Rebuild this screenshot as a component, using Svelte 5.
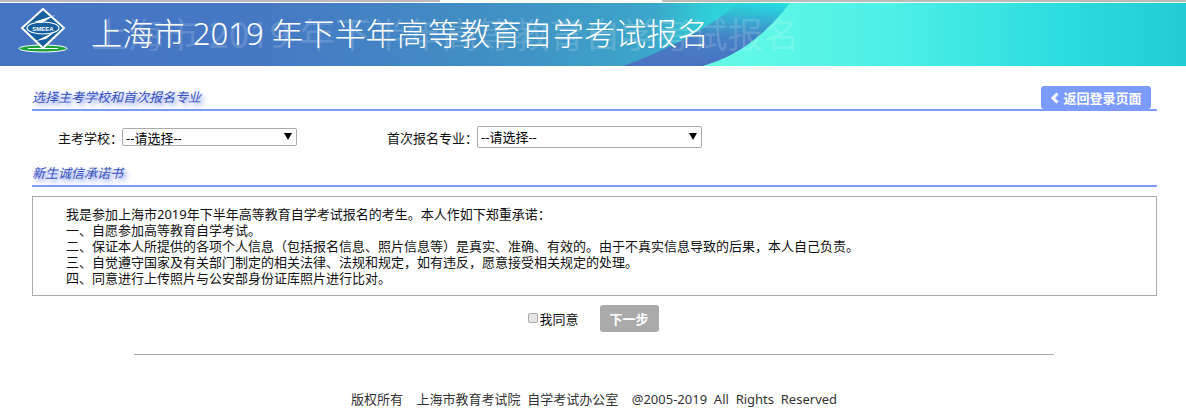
<script>
	let agreed = $state(false);

	const promises = [
		'我是参加上海市2019年下半年高等教育自学考试报名的考生。本人作如下郑重承诺:',
		'一、自愿参加高等教育自学考试。',
		'二、保证本人所提供的各项个人信息(包括报名信息、照片信息等)是真实、准确、有效的。由于不真实信息导致的后果,本人自己负责。',
		'三、自觉遵守国家及有关部门制定的相关法律、法规和规定,如有违反,愿意接受相关规定的处理。',
		'四、同意进行上传照片与公安部身份证库照片进行比对。'
	].map((line) => line.replaceAll(':', '\uFF1A').replaceAll(',', '\uFF0C').replaceAll('(', '\uFF08').replaceAll(')', '\uFF09'));
</script>

<div class="page">
	<div class="top-strip"></div>
	<header class="banner">
		<svg class="banner-bg" viewBox="0 0 1186 63" preserveAspectRatio="none" aria-hidden="true">
			<defs>
				<linearGradient id="base" x1="0" x2="1" y1="0" y2="0">
					<stop offset="0" stop-color="#4674c4" />
					<stop offset="0.22" stop-color="#4678c4" />
					<stop offset="0.42" stop-color="#4190c4" />
					<stop offset="0.55" stop-color="#3ca6ca" />
					<stop offset="0.6" stop-color="#2fd0da" />
					<stop offset="0.66" stop-color="#22e0e2" />
				</linearGradient>
				<linearGradient id="teal" x1="0" x2="1" y1="0" y2="0">
					<stop offset="0" stop-color="#66fbe6" />
					<stop offset="0.4" stop-color="#4cefe6" />
					<stop offset="0.75" stop-color="#2bdcdf" />
					<stop offset="1" stop-color="#22ccd6" />
				</linearGradient>
				<linearGradient id="swoosh" x1="0" x2="0" y1="0" y2="1">
					<stop offset="0" stop-color="#4a73c2" stop-opacity="0" />
					<stop offset="0.55" stop-color="#4a73c2" stop-opacity="0.85" />
					<stop offset="1" stop-color="#4a73c2" />
				</linearGradient>
			</defs>
			<rect width="1186" height="63" fill="url(#base)" />
			<path d="M623 63C665 48 705 28 738 0H800V63Z" fill="url(#swoosh)" />
			<path d="M703 63C742 52 768 28 790 0H1186V63Z" fill="url(#teal)" />
		</svg>
		<svg class="logo" viewBox="0 0 50 46" aria-hidden="true">
			<ellipse cx="25" cy="40.500" rx="24" ry="3.500" fill="#1aa33a" stroke="#fff" stroke-width="1" />
			<path d="M10 40.500h30" stroke="#fff" stroke-width="1" />
			<path d="M25 1 L46 20 L25 40 L4 20Z" fill="#16609f" stroke="#fff" stroke-width="2" />
			<ellipse cx="25" cy="20" rx="16" ry="6" fill="none" stroke="#fff" stroke-width="1.200" />
			<path d="M16 14L37 7L24 15ZM18 33L38 23L28 31Z" fill="#fff" />
			<text x="25" y="22.500" class="logo-text">SMEEA</text>
		</svg>
		<h1 class="title">上海市 2019 年下半年高等教育自学考试报名</h1>
		<span class="ghost" aria-hidden="true">上海市 2019 年下半年高等教育自学考试报名</span>
	</header>

	<main class="content">
		<div class="section-head first">
			<span class="section-title">选择主考学校和首次报名专业</span>
			<button type="button" class="back">
				<svg class="chevron" viewBox="0 0 10 12" aria-hidden="true"><path d="M7.500 1.500 3 6l4.500 4.500" /></svg>
				返回登录页面
			</button>
		</div>

		<div class="pickers">
			<label class="picker school">
				主考学校：
				<span class="select-wrap"><select><option>--请选择--</option></select></span>
			</label>
			<label class="picker major">
				首次报名专业：
				<span class="select-wrap"><select><option>--请选择--</option></select></span>
			</label>
		</div>

		<div class="section-head">
			<span class="section-title">新生诚信承诺书</span>
		</div>

		<div class="promise">
			{#each promises as line}
				<p>{line}</p>
			{/each}
		</div>

		<div class="agree-row">
			<label class="agree"><input type="checkbox" bind:checked={agreed} />我同意</label>
			<button type="button" class="next" disabled={!agreed}>下一步</button>
		</div>
	</main>

	<hr />

	<footer>版权所有&nbsp;&nbsp;&nbsp; 上海市教育考试院&nbsp; 自学考试办公室&nbsp;&nbsp;&nbsp; @2005-2019&nbsp; All&nbsp; Rights&nbsp; Reserved</footer>
</div>

<style>
	:global(body) {
		margin: 0;
		background: #fff;
	}

	.page {
		font-family: "Noto Sans", "Noto Sans CJK SC", sans-serif;
		font-size: 13px;
		color: #111;
	}

	.top-strip {
		height: 2px;
		margin-bottom: 1px;
		background: linear-gradient(to right, #bbb 440px, #fff 440px, #fff 662px, #bbb 662px);
	}

	.banner {
		position: relative;
		height: 63px;
		overflow: hidden;
		display: flex;
		align-items: center;
		padding-left: 91px;
	}

	.banner-bg {
		position: absolute;
		inset: 0;
		width: 100%;
		height: 100%;
	}

	.logo {
		position: absolute;
		left: 18px;
		top: 5px;
		width: 50px;
		height: 46px;
	}

	.logo-text {
		font-family: "Liberation Sans", sans-serif;
		font-size: 6px;
		font-weight: 700;
		fill: #fff;
		text-anchor: middle;
	}

	.title {
		position: relative;
		margin: 0;
		font-size: 31.200px;
		font-weight: 300;
		color: #fff;
		white-space: nowrap;
		transform: translateY(-3px);
	}

	.ghost {
		position: absolute;
		left: 92px;
		top: 4px;
		font-size: 35.700px;
		color: rgba(255, 255, 255, 0.16);
		white-space: nowrap;
	}

	.content {
		padding: 0 29px 0 32px;
	}

	.section-head {
		display: flex;
		align-items: flex-end;
		justify-content: space-between;
		height: 24px;
		border-bottom: 2px solid #7b9bff;
		padding-right: 6px;
	}

	.section-head.first {
		margin-top: 19px;
	}

	.section-title {
		font-style: italic;
		color: #3450c0;
		text-shadow: 3px 3px 5px #7b8ff0;
		line-height: 24px;
	}

	.back {
		display: inline-flex;
		align-items: center;
		justify-content: center;
		gap: 3px;
		width: 110px;
		height: 23px;
		padding: 0;
		border: 0;
		border-radius: 3px;
		background: #7b9bff;
		color: #fff;
		font: 700 13px "Noto Sans CJK SC", sans-serif;
	}

	.chevron {
		width: 10px;
		height: 12px;
		fill: none;
		stroke: #fff;
		stroke-width: 3;
	}

	.pickers {
		display: flex;
		align-items: center;
		height: 50px;
		padding-top: 2px;
		box-sizing: border-box;
	}

	.picker {
		display: flex;
		align-items: center;
		white-space: nowrap;
	}

	.school {
		padding-left: 26px;
		width: 355px;
		box-sizing: border-box;
	}

	.school .select-wrap {
		width: 175px;
		height: 18px;
		margin-left: -1px;
	}

	.major .select-wrap {
		width: 225px;
		height: 22px;
		margin-left: -1px;
	}

	.select-wrap {
		position: relative;
		display: block;
	}

	.select-wrap::after {
		content: '';
		position: absolute;
		right: 5px;
		top: 50%;
		margin-top: -4px;
		border: 4px solid transparent;
		border-top: 7px solid #000;
		border-bottom: 0;
		pointer-events: none;
	}

	select {
		appearance: none;
		display: block;
		width: 100%;
		height: 100%;
		box-sizing: border-box;
		margin: 0;
		padding: 0 0 0 3px;
		border: 1px solid #aaa;
		border-radius: 2px;
		background: #fff;
		color: #000;
		font: 13px "Noto Sans", "Noto Sans CJK SC", sans-serif;
	}

	.promise {
		margin-top: 9px;
		height: 100px;
		box-sizing: border-box;
		border: 1px solid #aaa;
		padding: 9px 33px;
		line-height: 16px;
	}

	.promise p {
		margin: 0;
	}

	.agree-row {
		display: flex;
		align-items: center;
		justify-content: center;
		gap: 21px;
		margin-top: 9px;
		padding-right: 2px;
	}

	.agree {
		display: flex;
		align-items: center;
	}

	.agree input {
		appearance: none;
		width: 10px;
		height: 10px;
		margin: 0 1px 2px 0;
		border: 1px solid #aaa;
		border-radius: 2px;
		background: #e6e6e6;
		box-sizing: border-box;
	}

	.next {
		width: 59px;
		height: 27px;
		padding: 0;
		border: 0;
		border-radius: 3px;
		background: #aaa;
		color: #fff;
		font: 700 13px "Noto Sans CJK SC", sans-serif;
	}

	hr {
		width: 920px;
		height: 1px;
		margin: 22px 0 0 134px;
		border: 0;
		background: #aaa;
	}

	footer {
		margin-top: 35px;
		padding-left: 2px;
		text-align: center;
		line-height: 18px;
		color: #333;
	}
</style>
